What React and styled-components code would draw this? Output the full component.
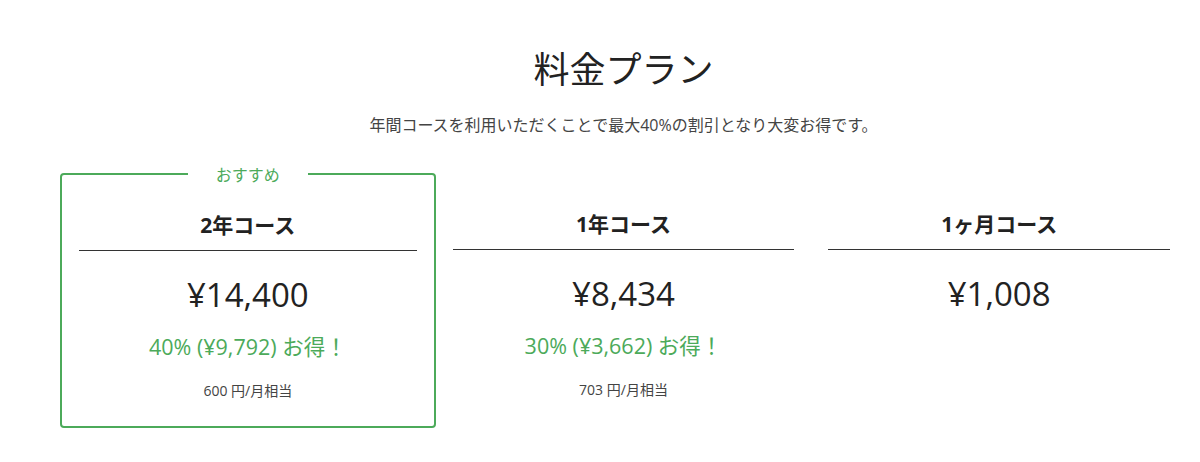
import React from 'react';
import styled, { createGlobalStyle } from 'styled-components';

const GlobalStyle = createGlobalStyle`
    body {
        margin: 0;
        background: #fff;
        font-family: "Open Sans", "Noto Sans CJK JP", sans-serif;
        color: #222;
    }
`;

const Page = styled.div`
    padding: 43px 13px 0 60px;
`;

const Title = styled.h1`
    margin: 0;
    text-align: center;
    font-size: 36px;
    line-height: 54px;
    font-weight: 400;
    color: #222;
`;

const Lead = styled.p`
    margin: 16px 0 0;
    text-align: center;
    font-size: 16px;
    line-height: 24px;
    color: #444;
`;

const Plans = styled.div`
    margin-top: 36px;
    display: grid;
    grid-template-columns: repeat(3, 1fr);
    align-items: start;
`;

const Card = styled.div`
    position: relative;
    padding: ${(p) => (p.$featured ? '35px 17px 25px' : '36px 17px 25px')};
    border: ${(p) => (p.$featured ? '2px solid #4caa5a' : 'none')};
    border-radius: 4px;
    text-align: center;
`;

const Badge = styled.span`
    position: absolute;
    top: 0;
    left: 50%;
    transform: translate(-50%, -50%);
    padding: 0 28px;
    background: #fff;
    color: #4caa5a;
    font-size: 16px;
    line-height: 22px;
    white-space: nowrap;
`;

const PlanName = styled.h2`
    margin: 0;
    padding-bottom: 10px;
    border-bottom: 1px solid #333;
    font-size: 21px;
    line-height: 30px;
    font-weight: 700;
    color: #222;
`;

const Price = styled.div`
    margin-top: 20px;
    font-size: 33px;
    line-height: 48px;
    color: #222;
`;

const Save = styled.div`
    margin-top: 13px;
    font-size: 21.5px;
    line-height: 30px;
    color: #4caa5a;
`;

const Monthly = styled.div`
    margin-top: 18px;
    font-size: 14px;
    line-height: 21px;
    color: #444;
`;

const plans = [
    { name: '2年コース', price: '¥14,400', save: '40% (¥9,792) お得！', monthly: '600 円/月相当', featured: true },
    { name: '1年コース', price: '¥8,434', save: '30% (¥3,662) お得！', monthly: '703 円/月相当' },
    { name: '1ヶ月コース', price: '¥1,008' },
];

const App = () => {
    return (
        <Page>
            <GlobalStyle />
            <Title>料金プラン</Title>
            <Lead>年間コースを利用いただくことで最大40%の割引となり大変お得です。</Lead>
            <Plans>
                {plans.map((v, i) => (
                    <Card key={i} $featured={v.featured}>
                        {v.featured && <Badge>おすすめ</Badge>}
                        <PlanName>{v.name}</PlanName>
                        <Price>{v.price}</Price>
                        {v.save && <Save>{v.save}</Save>}
                        {v.monthly && <Monthly>{v.monthly}</Monthly>}
                    </Card>
                ))}
            </Plans>
        </Page>
    );
};

export default App;
